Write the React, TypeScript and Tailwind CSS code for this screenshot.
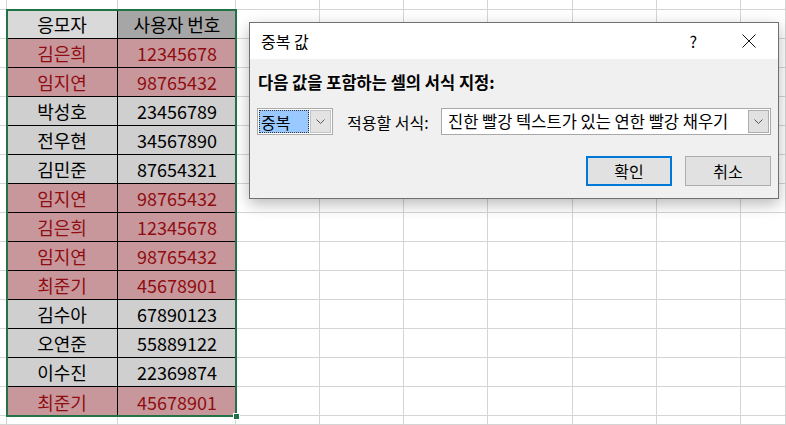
import React from "react";

interface Entry {
  name: string;
  id: string;
  dup: boolean;
}

const entries: Entry[] = [
  { name: "김은희", id: "12345678", dup: true },
  { name: "임지연", id: "98765432", dup: true },
  { name: "박성호", id: "23456789", dup: false },
  { name: "전우현", id: "34567890", dup: false },
  { name: "김민준", id: "87654321", dup: false },
  { name: "임지연", id: "98765432", dup: true },
  { name: "김은희", id: "12345678", dup: true },
  { name: "임지연", id: "98765432", dup: true },
  { name: "최준기", id: "45678901", dup: true },
  { name: "김수아", id: "67890123", dup: false },
  { name: "오연준", id: "55889122", dup: false },
  { name: "이수진", id: "22369874", dup: false },
  { name: "최준기", id: "45678901", dup: true },
];

const font = { fontFamily: '"Noto Sans CJK KR", "Noto Sans", sans-serif' };

function Chevron() {
  return (
    <svg width="9" height="6" viewBox="0 0 9 6" fill="none">
      <path d="M0.5 0.5 L4.5 4.5 L8.5 0.5" stroke="#555" strokeWidth="1" />
    </svg>
  );
}

function DataTable() {
  return (
    <div className="relative col-start-2 col-span-2 row-start-2 row-span-14 grid grid-cols-[111px_118px] grid-rows-[repeat(14,29px)] outline-2 -outline-offset-1 outline-[#217346] z-10">
      <div className="flex items-center justify-center bg-[#d9d9d9] border-r border-b border-black text-[18px] leading-none text-black">
        응모자
      </div>
      <div className="flex items-center justify-center bg-[#a6a6a6] border-b border-black text-[18px] leading-none text-black">
        사용자 번호
      </div>
      {entries.map((e, i) => {
        const last = i === entries.length - 1;
        const tone = e.dup ? "bg-[#c8979c] text-[#8f0d10]" : "bg-[#cfcfcf] text-black";
        return (
          <React.Fragment key={i}>
            <div
              className={`flex items-center justify-center border-r border-black text-[18px] leading-none ${tone} ${last ? "" : "border-b"}`}
            >
              {e.name}
            </div>
            <div
              className={`flex items-center justify-center border-black text-[18px] leading-none ${tone} ${last ? "" : "border-b"}`}
            >
              {e.id}
            </div>
          </React.Fragment>
        );
      })}
      <div className="absolute -right-[4px] -bottom-[4px] w-[7px] h-[7px] bg-[#217346] border border-white" />
    </div>
  );
}

function Dialog() {
  return (
    <div className="absolute left-[249px] top-[22px] w-[530px] h-[177px] flex flex-col bg-[#f0f0f0] border border-[#707070] shadow-[0_5px_14px_rgba(0,0,0,0.28)] z-20 text-black">
      <div className="h-[36px] bg-white flex items-center pl-[11px] pr-[22px]">
        <span className="text-[16px] leading-none">중복 값</span>
        <span className="ml-auto text-[16px] leading-none mr-[45px]">?</span>
        <svg width="14" height="14" viewBox="0 0 14 14">
          <path d="M0.5 0.5 L13.5 13.5 M13.5 0.5 L0.5 13.5" stroke="#111" strokeWidth="1" />
        </svg>
      </div>
      <div className="flex-1 flex flex-col pl-[7px] pr-[7px]">
        <div className="mt-[13px] h-[20px] flex items-center ml-px text-[16.5px] font-bold leading-none">
          다음 값을 포함하는 셀의 서식 지정:
        </div>
        <div className="mt-[16px] h-[27px] flex items-center">
          <div className="w-[76px] h-full flex items-stretch bg-white border border-[#a9a9a9] p-px">
            <div className="flex-1 flex items-center bg-[#99c9ff] border border-dotted border-[#333] pl-px text-[16px] leading-none">
              중복
            </div>
            <div className="w-[21px] ml-px flex items-center justify-center bg-[#e3e3e3] border border-[#c4c4c4]">
              <Chevron />
            </div>
          </div>
          <span className="ml-[14px] w-[82px] whitespace-nowrap text-[16px] leading-none">적용할 서식:</span>
          <div className="ml-[12px] flex-1 h-full flex items-center bg-white border border-[#a9a9a9] pl-[6px] pr-px">
            <span className="text-[16.5px] leading-none whitespace-nowrap">진한 빨강 텍스트가 있는 연한 빨강 채우기</span>
            <div className="ml-auto w-[21px] h-[23px] flex items-center justify-center bg-[#e1e1e1] border border-[#adadad]">
              <Chevron />
            </div>
          </div>
        </div>
        <div className="mt-[21px] flex justify-end gap-[13px]">
          <button className="w-[86px] h-[30px] bg-[#e1e1e1] border-2 border-[#0078d7] text-[16px] leading-none">
            확인
          </button>
          <button className="w-[86px] h-[30px] bg-[#e1e1e1] border border-[#adadad] text-[16px] leading-none">
            취소
          </button>
        </div>
      </div>
    </div>
  );
}

export default function App() {
  const fillers = Array.from({ length: 160 - 28 });

  return (
    <div className="relative w-[786px] h-[425px] overflow-hidden bg-white" style={font}>
      <div className="grid w-full h-full grid-cols-[7px_111px_118px_84px_84px_84px_85px_84px_84px_1fr] grid-rows-[10px_repeat(14,29px)_1fr]">
        <DataTable />
        {fillers.map((_, i) => (
          <div key={i} className="border-r border-b border-[#d4d4d4]" />
        ))}
      </div>
      <Dialog />
    </div>
  );
}
